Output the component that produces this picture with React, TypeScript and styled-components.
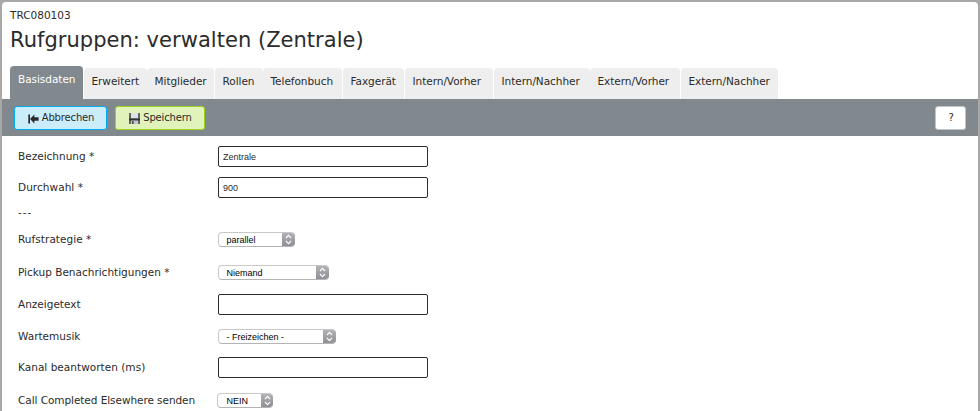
import React from 'react';
import styled, { createGlobalStyle } from 'styled-components';

const Global = createGlobalStyle`
  * { box-sizing: border-box; }
  html, body, #root { height: 100%; }
  body {
    margin: 0;
    overflow: hidden;
    background: #a8a8a8;
    color: #2b2b2b;
    font: 11px/14px "DejaVu Sans", Verdana, sans-serif;
  }
`;

const Page = styled.main`
  height: 411px;
  margin: 0 2px;
  padding-top: 2px;
`;
const Panel = styled.div`
  height: 409px;
  overflow: hidden;
  background: #fff;
  border-radius: 4px 4px 0 0;
`;
const Header = styled.header`
  height: 64px;
  padding: 6px 8px 0;
`;
const Code = styled.div`
  font-size: 10.5px;
`;
const Title = styled.h1`
  margin: 4px 0 0;
  font-size: 21px;
  line-height: 28px;
  font-weight: 400;
  letter-spacing: 0.03px;
  white-space: nowrap;
`;
const Tabs = styled.nav`
  display: flex;
  align-items: flex-end;
  height: 33px;
  padding-left: 8px;
`;
const Tab = styled.a<{ $w: number; $gap: number; $active?: boolean }>`
  flex: none;
  width: ${p => p.$w}px;
  height: ${p => (p.$active ? 33 : 31)}px;
  margin-right: ${p => p.$gap}px;
  padding: ${p => (p.$active ? '6px 0 0 8px' : '6px 0 0 7.5px')};
  border-radius: 4px 4px 0 0;
  background: ${p => (p.$active ? '#81888e' : '#eee')};
  color: ${p => (p.$active ? '#fff' : '#2b2b2b')};
  font-size: 10.5px;
  letter-spacing: -0.04px;
  white-space: nowrap;
`;
const Toolbar = styled.div`
  display: flex;
  align-items: flex-start;
  gap: 8px;
  height: 37px;
  padding: 7px 12px 0;
  background: #81888e;
`;
const tones = {
  blue: ['#cbedfa', '#00aaf2'],
  green: ['#e1f3bb', '#97d41b'],
  plain: ['#fff', '#c4c4c4'],
};
const Button = styled.button<{ $tone: keyof typeof tones; $w: number }>`
  display: flex;
  align-items: center;
  justify-content: center;
  gap: 3px;
  width: ${p => p.$w}px;
  height: 24px;
  padding: 0 0 1px 1px;
  border: 1px solid ${p => tones[p.$tone][1]};
  border-radius: 3px;
  background: ${p => tones[p.$tone][0]};
  color: #2b2b2b;
  font: 10px/14px "DejaVu Sans", Verdana, sans-serif;
  letter-spacing: -0.15px;
  white-space: nowrap;
  svg { flex: none; margin-top: 2px; }
`;
const Spacer = styled.span`
  flex: 1;
`;
const Form = styled.form`
  padding: 5px 16px 0;
`;
const Row = styled.div<{ $h: number }>`
  display: grid;
  grid-template-columns: 200px auto;
  align-items: center;
  justify-content: start;
  height: ${p => p.$h}px;
`;
const Label = styled.label<{ $ls?: number }>`
  padding-bottom: 2px;
  font-size: 10.5px;
  letter-spacing: ${p => p.$ls ?? 0}px;
  white-space: nowrap;
`;
const Input = styled.input`
  width: 210px;
  height: 21px;
  padding: 1px 4px 0;
  border: 1px solid #2b2b2b;
  border-radius: 2px;
  background: #fff;
  color: #2b2b2b;
  font: 9px "Liberation Sans", Arial, sans-serif;
  outline: 0;
`;
const Select = styled.div<{ $w: number; $shift?: number }>`
  display: flex;
  align-items: stretch;
  justify-content: space-between;
  width: ${p => p.$w}px;
  height: 15px;
  margin-left: ${p => p.$shift ?? 0}px;
  padding-left: ${p => 7.5 - (p.$shift ?? 0)}px;
  overflow: hidden;
  border: 1px solid #c8c8c8;
  border-right: 0;
  border-bottom-color: #b4b4b4;
  border-radius: 4px;
  color: #000;
  font: 9px/14px "Liberation Sans", Arial, sans-serif;
  white-space: nowrap;
`;
const Stepper = styled.span<{ $w: number }>`
  display: flex;
  align-items: center;
  justify-content: center;
  width: ${p => p.$w}px;
  margin: -1px 0;
  background: linear-gradient(#b4b4b8, #8c8c92);
`;

const BackIcon = () => (
  <svg width="11" height="10" viewBox="0 0 11 10">
    <path d="M0.3 0.5H2v9H.3z M2 5l4.4-4.4v2.7H10.6v3.4H6.4v2.7z" fill="#2b2b2b" />
  </svg>
);
const SaveIcon = () => (
  <svg width="11" height="11" viewBox="0 0 11 11">
    <path d="M0 0h11v11H0z" fill="#63676a" />
    <path d="M2 0h7v5.5H2z" fill="#dfe2e4" />
    <path d="M0 5.5h11v2H0z" fill="#303234" />
    <path d="M2 7.5h7V11H2z" fill="#c3c6c8" />
    <path d="M3 8h1.6v3H3z" fill="#4b4e50" />
  </svg>
);
const Arrows = () => (
  <svg width="7" height="11" viewBox="0 0 7 11" fill="none" stroke="#fff" strokeWidth="1.1">
    <path d="M1 4l2.5-2.6L6 4M1 7l2.5 2.6L6 7" />
  </svg>
);

const tabs = [
  { t: 'Basisdaten', w: 73, gap: 1 },
  { t: 'Erweitert', w: 63, gap: 0 },
  { t: 'Mitglieder', w: 67, gap: 1 },
  { t: 'Rollen', w: 48, gap: 0 },
  { t: 'Telefonbuch', w: 79, gap: 1 },
  { t: 'Faxgerät', w: 61, gap: 1 },
  { t: 'Intern/Vorher', w: 88, gap: 1 },
  { t: 'Intern/Nachher', w: 96, gap: 0 },
  { t: 'Extern/Vorher', w: 90, gap: 1 },
  { t: 'Extern/Nachher', w: 97, gap: 0 },
];

type Field = { label: string; h: number; input?: string; select?: string; w?: number; shift?: number; ls?: number };
const fields: Field[] = [
  { label: 'Bezeichnung *', h: 31, input: 'Zentrale' },
  { label: 'Durchwahl *', h: 31, input: '900', ls: 0.05 },
  { label: '---', h: 19, ls: 1 },
  { label: 'Rufstrategie *', h: 35, select: 'parallel', w: 77, ls: 0.05 },
  { label: 'Pickup Benachrichtigungen *', h: 31, select: 'Niemand', w: 111 },
  { label: 'Anzeigetext', h: 33, input: '' },
  { label: 'Wartemusik', h: 31, select: '- Freizeichen -', w: 118 },
  { label: 'Kanal beantworten (ms)', h: 31, input: '', ls: 0.03 },
  { label: 'Call Completed Elsewhere senden', h: 35, select: 'NEIN', w: 56, shift: -1, ls: -0.06 },
];

export default function App() {
  return (
    <>
      <Global />
      <Page>
        <Panel>
          <Header>
            <Code>TRC080103</Code>
            <Title>Rufgruppen: verwalten (Zentrale)</Title>
          </Header>
          <Tabs>
            {tabs.map((tab, i) => (
              <Tab key={tab.t} $w={tab.w} $gap={tab.gap} $active={i === 0}>{tab.t}</Tab>
            ))}
          </Tabs>
          <Toolbar>
            <Button $tone="blue" $w={93}><BackIcon />Abbrechen</Button>
            <Button $tone="green" $w={90}><SaveIcon />Speichern</Button>
            <Spacer />
            <Button $tone="plain" $w={31}>?</Button>
          </Toolbar>
          <Form>
            {fields.map(f => (
              <Row key={f.label} $h={f.h}>
                <Label $ls={f.ls}>{f.label}</Label>
                {f.input !== undefined && <Input defaultValue={f.input} />}
                {f.select && (
                  <Select $w={f.w!} $shift={f.shift}>
                    {f.select}
                    <Stepper $w={f.shift ? 12 : 13}><Arrows /></Stepper>
                  </Select>
                )}
              </Row>
            ))}
          </Form>
        </Panel>
      </Page>
    </>
  );
}
